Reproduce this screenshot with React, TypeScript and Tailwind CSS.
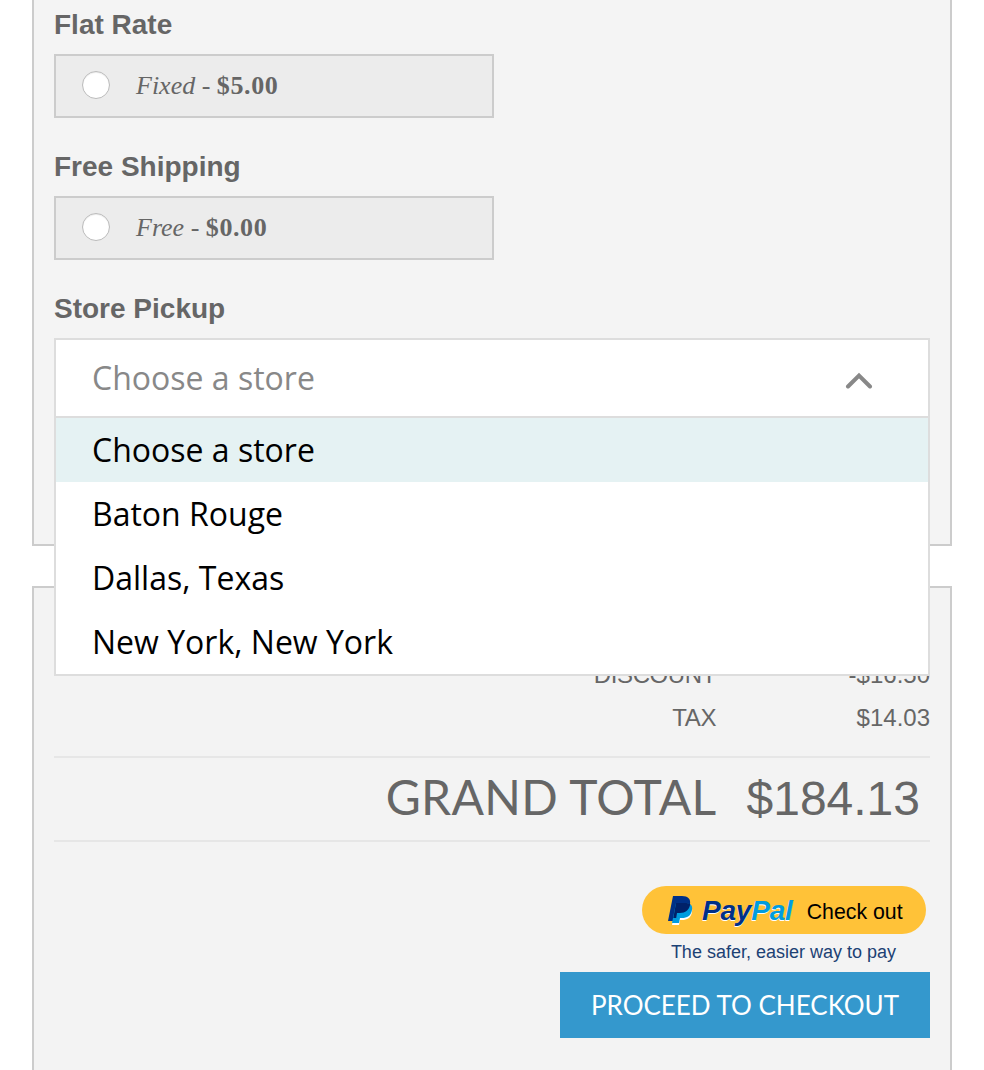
import React from 'react';

const STORES = ['Choose a store', 'Baton Rouge', 'Dallas, Texas', 'New York, New York'];

function ShippingOption({ title, kind, price }: { title: string; kind: string; price: string }) {
  return (
    <div className="mb-8">
      <h3 className="h-8 mb-[14px] pt-px text-[28px] leading-8 font-bold text-[#666]">{title}</h3>
      <label className="flex items-center h-16 w-[440px] border-2 border-[#ccc] bg-[#ececec] pl-[26px] text-[#666]">
        <span className="w-7 h-7 -mt-0.5 rounded-full bg-white border border-[#bbb] shadow-[inset_0_1px_1px_rgba(0,0,0,0.08)]" />
        <span className="ml-[26px] -mt-0.5 text-[26px] font-['Liberation_Serif',serif]">
          <em>{kind}</em> - <strong className="tracking-[0.6px]">{price}</strong>
        </span>
      </label>
    </div>
  );
}

function PayPalMark() {
  return (
    <svg width="25" height="29" viewBox="0 0 25 29" className="shrink-0">
      <path d="M8 9h9c5 0 8 2 7 7-1 6-5 8-10 8h-2l-1 5H4z" fill="#fff" />
      <path d="M5 0h9c6 0 9 3 8 8-1 6-5 9-10 9H9l-1.300 8H0z" fill="#003087" />
      <path d="M8 7h9c5 0 8 2 7 7-1 6-5 8-10 8h-2l-1 5H4z" fill="#009cde" />
      <path d="M8 7h9c2 0 4 .3 5.300 1-1 6-5 9-10.300 9H9l-.8 5H5.300z" fill="#012169" />
    </svg>
  );
}

export default function App() {
  return (
    <div className="h-[1070px] overflow-hidden bg-white px-8 w-[984px] font-['Liberation_Sans',Arial,sans-serif]">
      <section className="relative z-10 h-[546px] w-[920px] border-x-2 border-b-2 border-[#ccc] bg-[#f4f4f4] px-5 pt-2">
        <ShippingOption title="Flat Rate" kind="Fixed" price="$5.00" />
        <ShippingOption title="Free Shipping" kind="Free" price="$0.00" />
        <h3 className="h-8 mb-[14px] pt-px text-[28px] leading-8 font-bold text-[#666]">Store Pickup</h3>
        <div className="relative font-['Open_Sans',sans-serif] text-[32px]">
          <div className="flex items-center justify-between h-20 border-2 border-[#ddd] bg-white pl-[36px] pr-[54px] text-[#888]">
            <span>Choose a store</span>
            <svg width="30" height="18" viewBox="0 0 30 18" className="mt-1">
              <path d="M4 15.500L15 4.500l11 11" fill="none" stroke="#888" strokeWidth="4" strokeLinecap="round" />
            </svg>
          </div>
          <ul className="absolute left-0 right-0 top-[78px] border-2 border-[#ddd] bg-white text-black">
            {STORES.map((store, i) => (
              <li key={store} className={`flex items-center h-16 pl-[36px] ${i === 0 ? 'bg-[#e5f2f3]' : ''}`}>
                {store}
              </li>
            ))}
          </ul>
        </div>
      </section>

      <section className="mt-10 h-[600px] w-[920px] border-x-2 border-t-2 border-[#ccc] bg-[#f3f3f3] px-5 pt-[65px] text-[#666]">
        <div className="flex justify-end h-[43px] items-center text-[24px]">
          <span className="tracking-[-0.4px]">DISCOUNT</span>
          <span className="w-[214px] text-right">-$16.50</span>
        </div>
        <div className="flex justify-end h-[43px] items-center text-[24px]">
          <span className="tracking-[-0.4px]">TAX</span>
          <span className="w-[214px] text-right">$14.03</span>
        </div>
        <div className="mt-[17px] flex justify-end items-center h-[86px] border-y-2 border-[#e6e6e6] pr-[10px]">
          <span className="-mt-1 font-['Lato',sans-serif] text-[48px] tracking-[0.3px]">GRAND TOTAL</span>
          <span className="ml-[30px] text-[48px] leading-none">$184.13</span>
        </div>
        <div className="mt-[44px] flex flex-col items-end">
          <button className="flex items-center w-[284px] h-12 mr-1 rounded-full bg-[#ffc238] pl-[26px] text-black">
            <PayPalMark />
            <span className="ml-[9px] mt-0.5 text-[28px] font-bold italic text-[#003087] tracking-[-0.2px] [text-shadow:0_1px_0_#fff]">
              Pay<span className="text-[#009cde]">Pal</span>
            </span>
            <span className="ml-[14px] mt-[5px] text-[21.300px]">Check out</span>
          </button>
          <p className="mt-[5px] mr-[34px] text-[18px] leading-[26px] text-[#1c4174]">The safer, easier way to pay</p>
          <button className="mt-[7px] h-[66px] w-[370px] bg-[#3498cd] text-white font-['Lato',sans-serif] text-[26px]">
            PROCEED TO CHECKOUT
          </button>
        </div>
      </section>
    </div>
  );
}
